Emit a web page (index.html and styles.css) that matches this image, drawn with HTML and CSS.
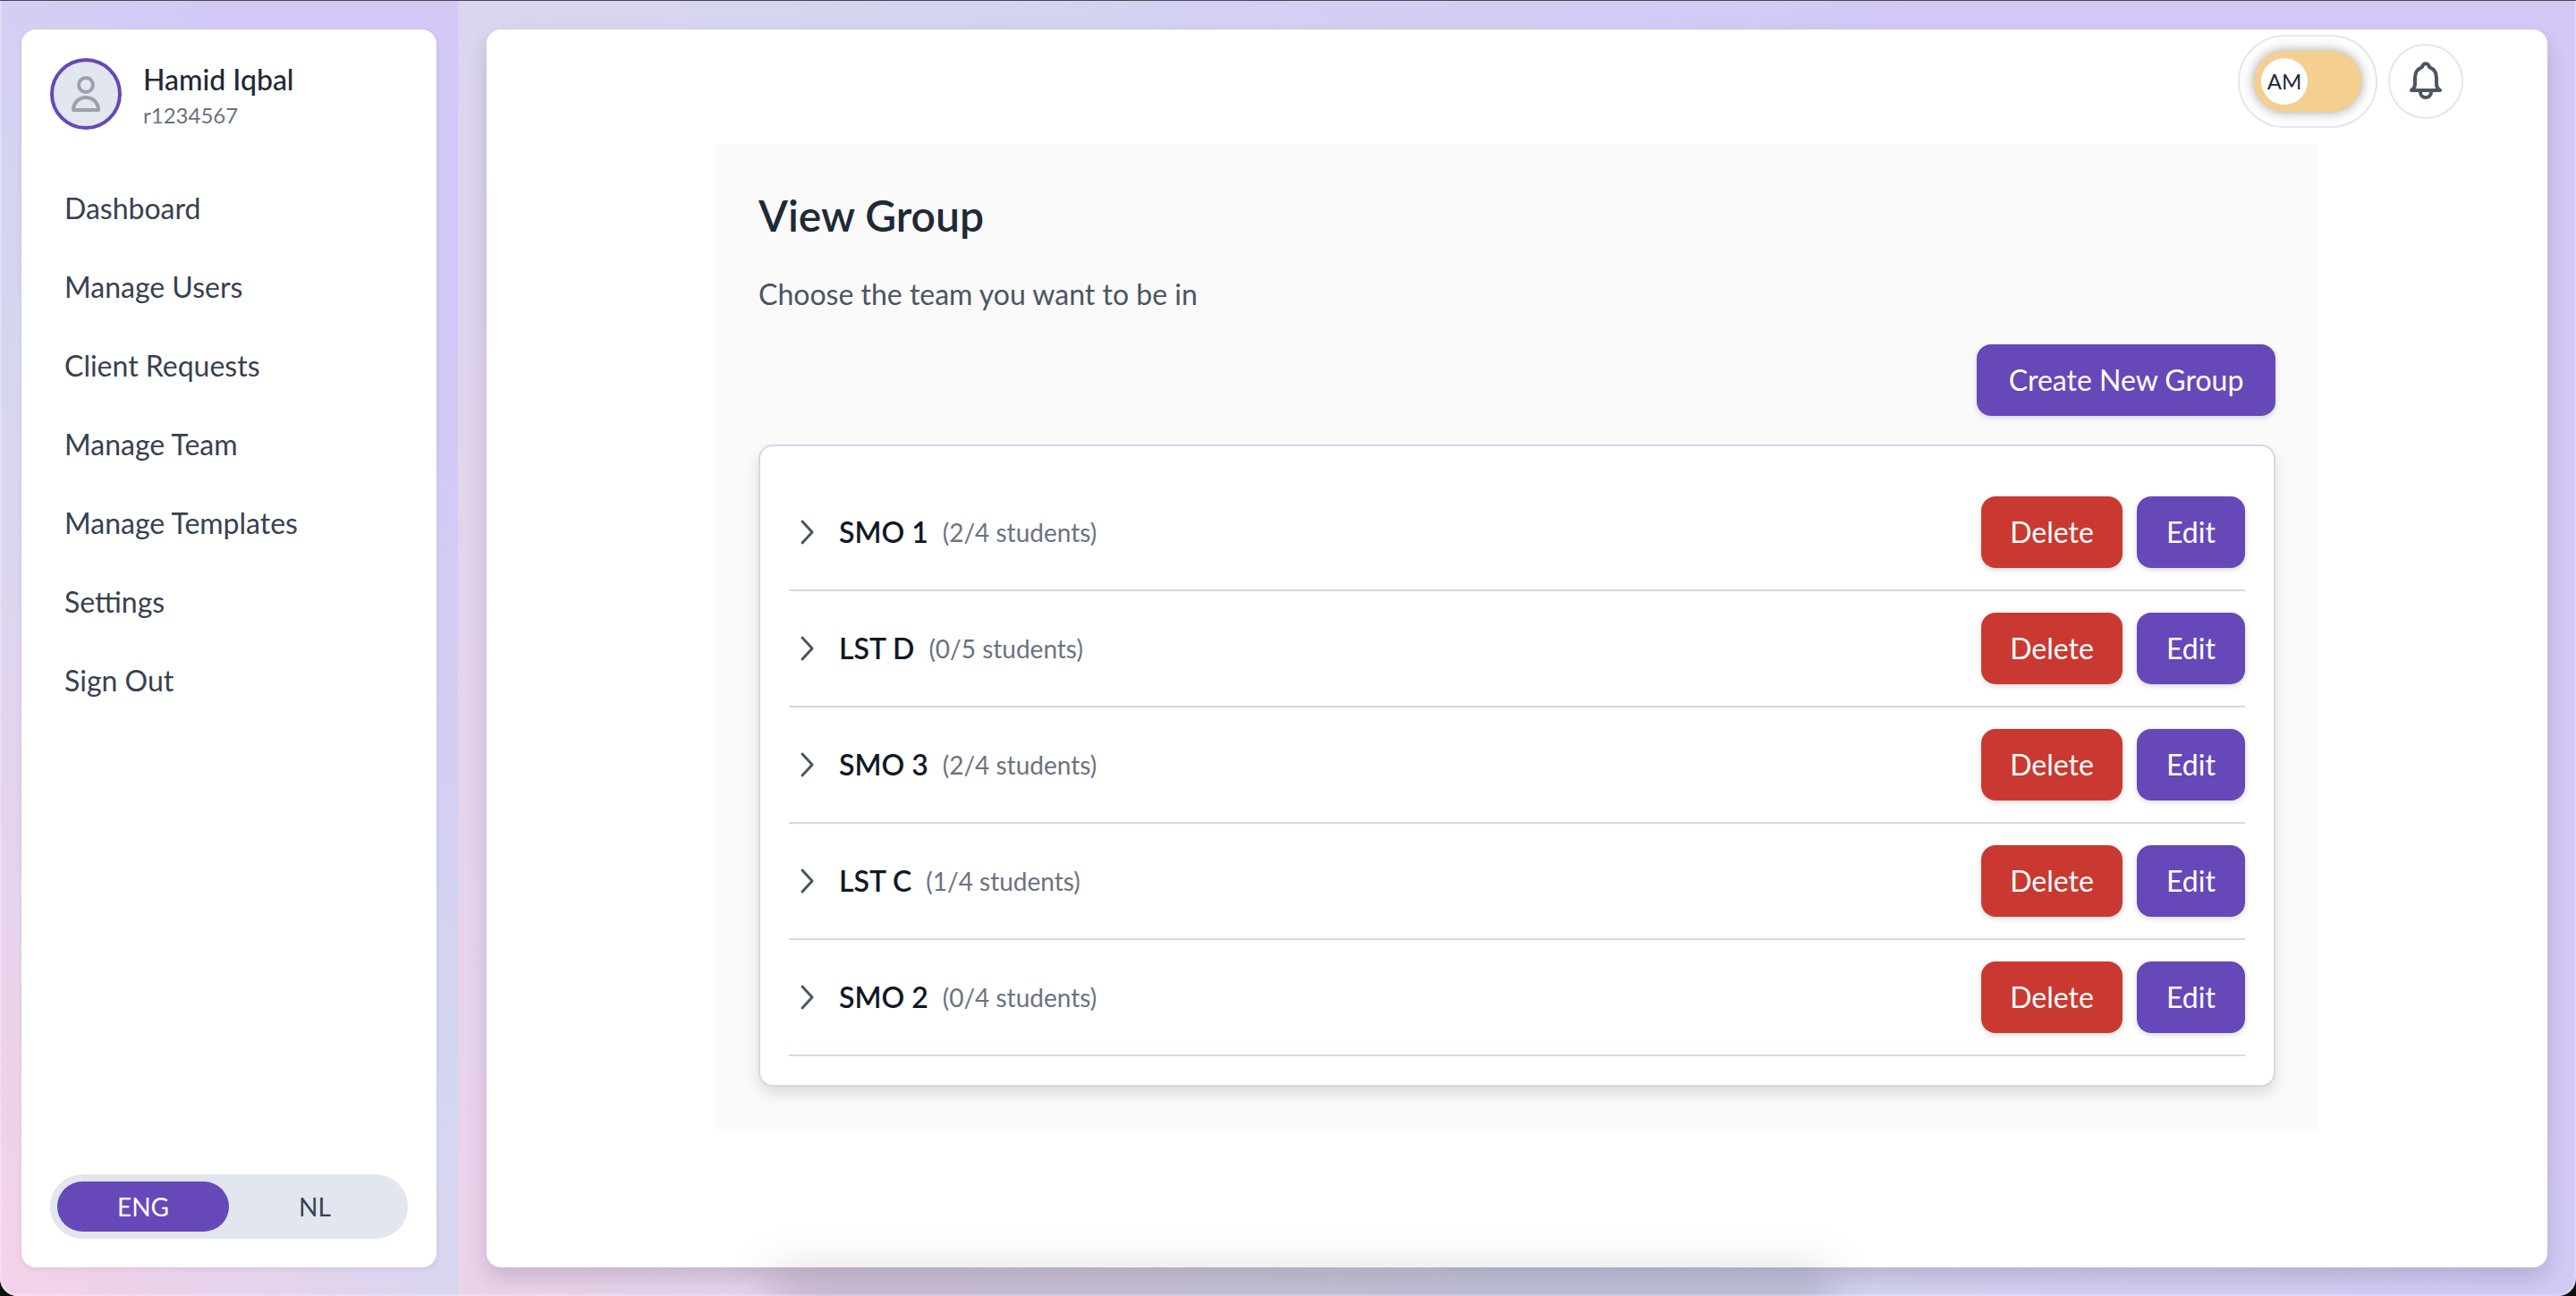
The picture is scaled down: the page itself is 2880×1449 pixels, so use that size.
FILE: index.html
```
<!DOCTYPE html>
<html lang="en">
<head>
<meta charset="utf-8">
<title>View Group</title>
<meta name="viewport" content="width=device-width, initial-scale=1">
<link rel="stylesheet" href="styles.css">
</head>
<body>
<div class="app">
  <aside class="sidebar">
    <div class="sidebar-card">
      <div class="profile">
        <span class="avatar">
          <svg viewBox="0 0 48 48" fill="none" stroke="currentColor" stroke-width="4" stroke-linecap="round" stroke-linejoin="round" aria-hidden="true">
            <circle cx="24" cy="14" r="8"/>
            <path d="M10 42c0-8 6-14 14-14s14 6 14 14z"/>
          </svg>
        </span>
        <div class="profile-text">
          <span class="profile-name">Hamid Iqbal</span>
          <span class="profile-id">r1234567</span>
        </div>
      </div>
      <nav class="nav">
        <a href="#">Dashboard</a>
        <a href="#">Manage Users</a>
        <a href="#">Client Requests</a>
        <a href="#">Manage Team</a>
        <a href="#">Manage Templates</a>
        <a href="#">Settings</a>
        <a href="#">Sign Out</a>
      </nav>
      <div class="language">
        <button type="button" class="language-option active">ENG</button>
        <button type="button" class="language-option">NL</button>
      </div>
    </div>
  </aside>
  <main class="content">
    <div class="content-card">
      <header class="toolbar">
        <div class="mode-frame">
          <button type="button" class="mode-toggle" aria-label="Mode"><span class="mode-knob">AM</span></button>
        </div>
        <button type="button" class="bell" aria-label="Notifications">
          <svg viewBox="0 0 40 44" fill="none" stroke="currentColor" stroke-width="4" stroke-linecap="round" stroke-linejoin="round" aria-hidden="true">
            <path d="M4 32C7 30 8 28 8 25V18C8 12 11 8 16 6C16 1 24 1 24 6C29 8 32 12 32 18V25C32 28 33 30 36 32Z"/>
            <path d="M14 34a6 6 0 0 0 12 0"/>
          </svg>
        </button>
      </header>
      <section class="panel">
        <h1>View Group</h1>
        <p class="lead">Choose the team you want to be in</p>
        <div class="actions"><button type="button" class="button create">Create New Group</button></div>
        <ul class="groups">
          <li class="group">
            <button type="button" class="group-toggle"><svg viewBox="0 0 24 32" aria-hidden="true"><path d="M7 4l11 12L7 28"/></svg><span class="group-name">SMO 1</span><span class="group-count">(2/4 students)</span></button>
            <button type="button" class="button danger">Delete</button><button type="button" class="button edit">Edit</button>
          </li>
          <li class="group">
            <button type="button" class="group-toggle"><svg viewBox="0 0 24 32" aria-hidden="true"><path d="M7 4l11 12L7 28"/></svg><span class="group-name">LST D</span><span class="group-count">(0/5 students)</span></button>
            <button type="button" class="button danger">Delete</button><button type="button" class="button edit">Edit</button>
          </li>
          <li class="group">
            <button type="button" class="group-toggle"><svg viewBox="0 0 24 32" aria-hidden="true"><path d="M7 4l11 12L7 28"/></svg><span class="group-name">SMO 3</span><span class="group-count">(2/4 students)</span></button>
            <button type="button" class="button danger">Delete</button><button type="button" class="button edit">Edit</button>
          </li>
          <li class="group">
            <button type="button" class="group-toggle"><svg viewBox="0 0 24 32" aria-hidden="true"><path d="M7 4l11 12L7 28"/></svg><span class="group-name">LST C</span><span class="group-count">(1/4 students)</span></button>
            <button type="button" class="button danger">Delete</button><button type="button" class="button edit">Edit</button>
          </li>
          <li class="group">
            <button type="button" class="group-toggle"><svg viewBox="0 0 24 32" aria-hidden="true"><path d="M7 4l11 12L7 28"/></svg><span class="group-name">SMO 2</span><span class="group-count">(0/4 students)</span></button>
            <button type="button" class="button danger">Delete</button><button type="button" class="button edit">Edit</button>
          </li>
        </ul>
      </section>
    </div>
  </main>
  <div class="bottom-shade" aria-hidden="true"></div>
</div>
</body>
</html>
```
FILE: styles.css
```
*, *::before, *::after { box-sizing: border-box; }

:root {
  --purple: #6648b9;
  --red: #ca3931;
  --line: #d9d6e6;
  --border: #e5e5eb;
  --wash: linear-gradient(60deg, #f5d1e9, #d4d6f0 47%, #d3c8f6 80%);
}

body {
  margin: 0;
  background: #0a120d;
  font-family: Lato, "Liberation Sans", sans-serif;
  font-size: 32px;
  line-height: 48px;
  color: #1f2937;
}

button {
  font: inherit;
  color: inherit;
  border: 0;
  padding: 0;
  background: none;
  cursor: pointer;
}

.app {
  position: relative;
  display: flex;
  min-height: 100vh;
  border-top: 1px solid #4a4650;
  border-radius: 0 0 20px 20px;
  overflow: hidden;
  background: var(--wash);
}

/* Pale rim along the window's sides and bottom */
.app::after {
  content: "";
  position: absolute;
  inset: 0;
  border: 2px solid rgba(255, 255, 255, 0.25);
  border-top: 0;
  border-radius: 0 0 20px 20px;
  pointer-events: none;
}

.sidebar {
  display: flex;
  flex: 0 0 512px;
  padding: 32px 24px;
  background: var(--wash);
}

.sidebar-card {
  display: flex;
  flex: 1;
  flex-direction: column;
  padding: 32px;
  border-radius: 16px;
  background: #fff;
  box-shadow: 0 2px 6px rgba(0, 0, 0, 0.08);
}

.profile { display: flex; align-items: center; gap: 24px; height: 80px; }

.avatar {
  display: flex;
  align-items: center;
  justify-content: center;
  width: 80px;
  height: 80px;
  border: 4px solid var(--purple);
  border-radius: 50%;
  background: #e2e6ee;
  color: #9ea1ad;
}

.avatar svg { width: 48px; height: 48px; }

.profile-text { display: flex; flex-direction: column; padding-top: 8px; }
.profile-name { line-height: 40px; font-weight: 500; }
.profile-id { font-size: 24px; line-height: 40px; color: #6b7280; }

.nav { display: flex; flex-direction: column; margin-top: 44px; }
.nav a { padding: 20px 16px; color: #374151; text-decoration: none; }

.language {
  display: flex;
  margin-top: auto;
  padding: 8px;
  border-radius: 36px;
  background: #e2e6ee;
}

.language-option { flex: 1; height: 56px; border-radius: 28px; font-size: 28px; line-height: 40px; color: #374151; }
.language-option.active { background: var(--purple); color: #fff; }

.content { display: flex; flex: 1; padding: 32px; }

.content-card {
  flex: 1;
  border-radius: 16px;
  background: #fff;
  box-shadow: 0 12px 24px rgba(0, 0, 0, 0.14);
}

.toolbar {
  display: flex;
  align-items: center;
  justify-content: flex-end;
  gap: 12px;
  padding: 6px 94px 0 0;
}

.mode-frame { padding: 16px; border: 2px solid var(--border); border-radius: 52px; }

.mode-toggle {
  display: flex;
  align-items: center;
  width: 120px;
  height: 68px;
  padding: 8px;
  border-radius: 34px;
  background: #f4cf90;
  box-shadow: 0 0 14px rgba(0, 0, 0, 0.38);
}

.mode-knob {
  width: 52px;
  height: 52px;
  border-radius: 50%;
  background: #fff;
  font-size: 24px;
  line-height: 52px;
}

.bell {
  display: flex;
  align-items: center;
  justify-content: center;
  width: 84px;
  height: 84px;
  border: 2px solid var(--border);
  border-radius: 50%;
  color: #4b5563;
}

.bell svg { width: 40px; height: 44px; }

.panel {
  max-width: 1792px;
  margin: 18px auto 0;
  padding: 48px;
  background: #fafafa;
}

h1 { margin: 0; font-size: 48px; line-height: 64px; font-weight: 600; }
.lead { margin: 32px 0; color: #4b5563; }

.actions { display: flex; justify-content: flex-end; }

.button {
  height: 80px;
  padding: 0 24px;
  border-radius: 16px;
  background: var(--purple);
  color: #fff;
  box-shadow: 0 2px 6px rgba(0, 0, 0, 0.16);
}

.button.create { min-width: 334px; }
.button.danger { min-width: 158px; background: var(--red); }
.button.edit { min-width: 121px; }

.groups {
  margin: 32px 0 0;
  padding: 32px;
  border: 2px solid var(--line);
  border-radius: 16px;
  background: #fff;
  list-style: none;
  box-shadow: 0 8px 16px rgba(0, 0, 0, 0.12);
}

.group {
  display: flex;
  align-items: center;
  gap: 16px;
  padding: 24px 0;
  border-bottom: 2px solid var(--line);
}

.group-toggle { display: flex; align-items: center; margin-right: auto; padding-left: 8px; }
.group-toggle svg { width: 24px; height: 32px; margin-right: 24px; fill: none; stroke: #4b5563; stroke-width: 3; stroke-linecap: round; stroke-linejoin: round; }
.group-name { margin-right: 16px; font-weight: 600; color: #111827; }
.group-count { font-size: 28px; color: #6b7280; }

/* Soft shade rising from the bottom edge of the window */
.bottom-shade {
  position: absolute;
  right: 29%;
  bottom: -80px;
  left: 30%;
  height: 112px;
  background: rgba(0, 0, 0, 0.12);
  filter: blur(24px);
  pointer-events: none;
}
```
